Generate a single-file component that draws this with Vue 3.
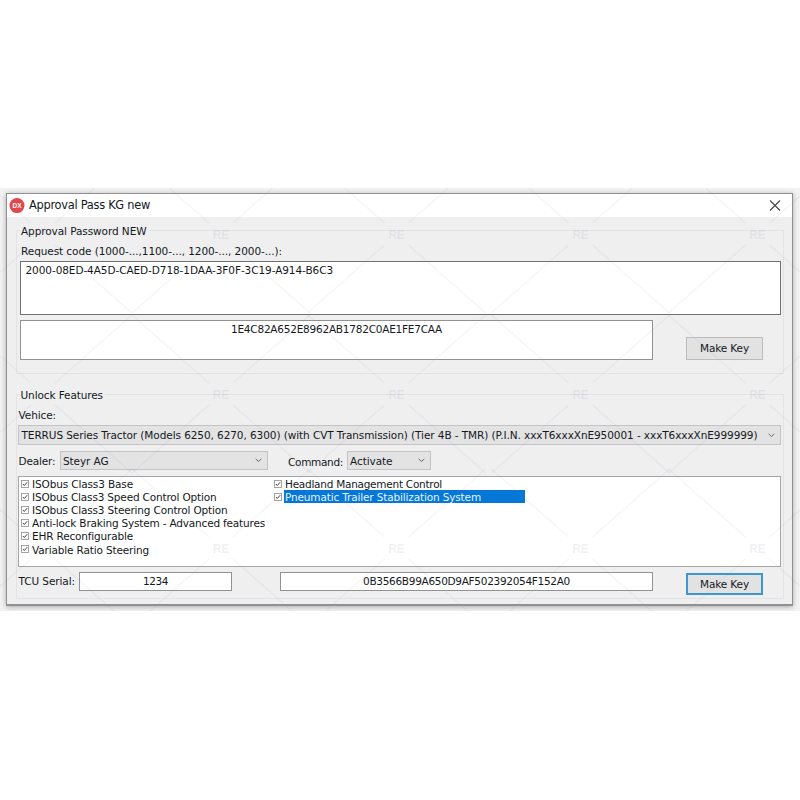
<script setup>
import { ref } from 'vue'

const requestCode = ref('2000-08ED-4A5D-CAED-D718-1DAA-3F0F-3C19-A914-B6C3')
const approvalKey = ref('1E4C82A652E8962AB1782C0AE1FE7CAA')
const serial = ref('1234')
const featureKey = ref('0B3566B99A650D9AF502392054F152A0')

const columns = [
  [
    { text: 'ISObus Class3 Base', width: 101 },
    { text: 'ISObus Class3 Speed Control Option', width: 184.5 },
    { text: 'ISObus Class3 Steering Control Option', width: 195.5 },
    { text: 'Anti-lock Braking System - Advanced features', width: 233 },
    { text: 'EHR Reconfigurable', width: 101 },
    { text: 'Variable Ratio Steering', width: 117 },
  ],
  [
    { text: 'Headland Management Control', width: 157 },
    { text: 'Pneumatic Trailer Stabilization System', width: 196, selected: true },
  ],
]

const marks = []
for (const y of [46, 206, 360]) {
  for (const x of [43, 221, 396.5, 580.5, 757.5]) marks.push({ x, y, lettered: x > 100 })
}

// Spreads a label over the given width by adjusting its tracking.
const vFit = {
  mounted(el, { value }) {
    const natural = el.getBoundingClientRect().width
    el.style.letterSpacing = (value - natural) / el.textContent.length + 'px'
  },
}
</script>

<template>
  <main class="page">
    <div class="stage">
      <section class="window">
        <header class="titlebar">
          <svg class="logo" viewBox="0 0 16 16" width="16" height="16">
            <circle cx="8" cy="7.6" r="7.5" fill="#e2474b" />
            <text x="8" y="10" text-anchor="middle" class="logo-text">DX</text>
          </svg>
          <h1><span v-fit="121">Approval Pass KG new</span></h1>
          <svg class="close" viewBox="0 0 12 12" width="12" height="12">
            <path d="M1 0.5 L11 10.5 M11 0.5 L1 10.5" stroke="#444" stroke-width="1.1" fill="none" />
          </svg>
        </header>

        <div class="content">
          <section class="group first">
            <div class="legend"><span v-fit="125.5">Approval Password NEW</span></div>
            <div class="label request"><span v-fit="261">Request code (1000-...,1100-..., 1200-..., 2000-...):</span></div>
            <div class="field memo"><span v-fit="307.5">{{ requestCode }}</span></div>
            <div class="key-row">
              <div class="field key"><span v-fit="211">{{ approvalKey }}</span></div>
              <button class="btn"><span v-fit="49">Make Key</span></button>
            </div>
          </section>

          <section class="group second">
            <div class="legend"><span v-fit="82.5">Unlock Features</span></div>
            <div class="label vehicle"><span v-fit="37.5">Vehice:</span></div>
            <div class="combo wide">
              <span v-fit="736">TERRUS Series Tractor (Models 6250, 6270, 6300) (with CVT Transmission) (Tier 4B - TMR) (P.I.N. xxxT6xxxXnE950001 - xxxT6xxxXnE999999)</span>
              <svg class="arrow" viewBox="0 0 7 5" width="7" height="5"><path d="M0.7 0.8 L3.5 3.6 L6.3 0.8" /></svg>
            </div>
            <div class="options">
              <div class="label dealer"><span v-fit="37">Dealer:</span></div>
              <div class="combo dealer-combo">
                <span v-fit="45.5">Steyr AG</span>
                <svg class="arrow" viewBox="0 0 7 5" width="7" height="5"><path d="M0.7 0.8 L3.5 3.6 L6.3 0.8" /></svg>
              </div>
              <div class="label command"><span v-fit="55">Command:</span></div>
              <div class="combo command-combo">
                <span v-fit="42.5">Activate</span>
                <svg class="arrow" viewBox="0 0 7 5" width="7" height="5"><path d="M0.7 0.8 L3.5 3.6 L6.3 0.8" /></svg>
              </div>
            </div>
            <div class="list">
              <ul v-for="(col, c) in columns" :key="c">
                <li v-for="item in col" :key="item.text">
                  <svg class="check" viewBox="0 0 8 8" width="8" height="8">
                    <rect x="0.5" y="0.5" width="7" height="7" fill="#fff" stroke="#9a9a9a" stroke-width="0.9" />
                    <path d="M1.9 4 L3.3 5.5 L6.2 2.2" fill="none" stroke="#444" stroke-width="1" />
                  </svg>
                  <div class="item" :class="{ selected: item.selected }"><span v-fit="item.width">{{ item.text }}</span></div>
                </li>
              </ul>
            </div>
            <div class="serial-row">
              <div class="label tcu"><span v-fit="56.5">TCU Serial:</span></div>
              <div class="field serial"><span v-fit="25">{{ serial }}</span></div>
              <div class="field feature-key"><span v-fit="207">{{ featureKey }}</span></div>
              <button class="btn focused"><span v-fit="49">Make Key</span></button>
            </div>
          </section>
        </div>
      </section>

      <svg class="watermark" viewBox="0 0 800 423" width="800" height="423">
        <g v-for="(m, i) in marks" :key="i" :transform="`translate(${m.x} ${m.y})`">
          <path d="M12 -11 L89 -79 M12 11 L89 79 M-12 11 L-89 79 M-12 -11 L-89 -79" stroke="#80809c" stroke-opacity="0.075" stroke-width="1.4" />
          <text v-if="m.lettered" text-anchor="middle" y="5" class="mark">RE</text>
        </g>
      </svg>
    </div>
  </main>
</template>

<style>
body {
  background: #fff;
}
</style>

<style scoped>
* {
  box-sizing: border-box;
}
.page {
  width: 800px;
  height: 800px;
  padding-top: 188px;
  background: #fff;
  font-family: 'DejaVu Sans', sans-serif;
  font-size: 10.5px;
  color: #14181c;
  overflow: hidden;
}
.stage {
  position: relative;
  height: 423px;
  padding: 5px 7px 5px 6px;
  background: #f2f2f2;
  overflow: hidden;
}
.window {
  height: 413px;
  border: 1px solid #909094;
  border-bottom-width: 2px;
  background: #efeff0;
  box-shadow: 0 1px 5px rgba(0, 0, 0, 0.3);
}
span {
  white-space: pre;
}
.titlebar {
  display: flex;
  align-items: center;
  height: 23px;
  padding: 0 11px 0 2px;
  background: #fff;
}
.logo-text {
  font: bold 6.5px 'Liberation Sans', sans-serif;
  fill: #fff;
}
h1 {
  flex: 1;
  margin: 0 0 0 4px;
  font-size: 11.4px;
  font-weight: 400;
  line-height: 23px;
}
.content {
  padding: 13px 8px 0 9px;
}
.group {
  display: flex;
  flex-direction: column;
  border: 1px solid #e3e3e6;
}
.first {
  height: 144px;
  padding: 0 2px 0 3px;
}
.second {
  height: 205px;
  margin-top: 20px;
  padding: 0 2px 0 1px;
}
.legend {
  align-self: flex-start;
  height: 14px;
  margin-top: -7px;
  padding: 0 2px 0 1px;
  line-height: 15px;
  background: #efeff0;
}
.second .legend {
  margin-left: 1.5px;
}
.label {
  line-height: 15px;
}
.request {
  margin: 6px 0 2px 1px;
}
.field {
  border: 1px solid #929295;
  background: #fff;
  text-align: center;
}
.memo {
  height: 54px;
  padding: 1px 4.5px;
  border-color: #707073;
  text-align: left;
  line-height: 15px;
}
.key-row {
  display: flex;
  margin-top: 5px;
}
.key {
  width: 633px;
  height: 40px;
  padding-top: 1px;
  line-height: 15px;
}
.btn {
  width: 77px;
  height: 23px;
  margin: 17px 0 0 33px;
  padding: 0;
  border: 1px solid #bcbcbe;
  background: #e2e2e3;
  color: inherit;
  font: inherit;
  line-height: 21px;
}
.vehicle {
  margin-top: 6px;
  padding-left: 0.5px;
}
.combo {
  display: flex;
  align-items: center;
  justify-content: space-between;
  height: 19px;
  padding: 0 5px 0 2px;
  border: 1px solid #c3c3c5;
  background: #e3e3e4;
}
.arrow path {
  fill: none;
  stroke: #666;
  stroke-width: 1;
}
.wide {
  height: 20px;
  margin-top: 2px;
  padding: 0 5px 0 2.5px;
}
.options {
  display: flex;
  height: 19px;
  margin-top: 6px;
}
.dealer {
  width: 42px;
  padding: 3px 0 0 0.5px;
}
.dealer-combo {
  width: 208px;
}
.command {
  width: 79px;
  padding: 4px 0 0 20px;
}
.command-combo {
  width: 84px;
}
.list {
  display: flex;
  height: 91px;
  margin-top: 6px;
  border: 1px solid #a5a5a8;
  background: #fff;
}
ul {
  width: 253px;
  margin: 0;
  padding: 0 0 0 2px;
  list-style: none;
}
li {
  display: flex;
  align-items: center;
  height: 13.1px;
}
.item {
  width: 243px;
  height: 13px;
  margin-left: 1.5px;
  padding-left: 1.5px;
  line-height: 14px;
}
.check {
  flex: none;
}
.selected {
  background: #0578d7;
  color: #e6f3fc;
}
.serial-row {
  display: flex;
  margin-top: 5px;
}
.tcu {
  width: 61px;
  padding: 2px 0 0 0.5px;
}
.serial,
.feature-key {
  height: 19px;
  line-height: 17px;
}
.serial {
  width: 153px;
}
.feature-key {
  width: 373px;
  margin-left: 48px;
}
.btn.focused {
  margin-top: 1px;
  height: 22px;
  border: 2px solid #3c97d3;
  line-height: 18px;
}
.watermark {
  position: absolute;
  inset: 0;
  pointer-events: none;
}
.mark {
  font: bold 12px 'Liberation Sans', sans-serif;
  fill: #80809c;
  fill-opacity: 0.12;
}
</style>
